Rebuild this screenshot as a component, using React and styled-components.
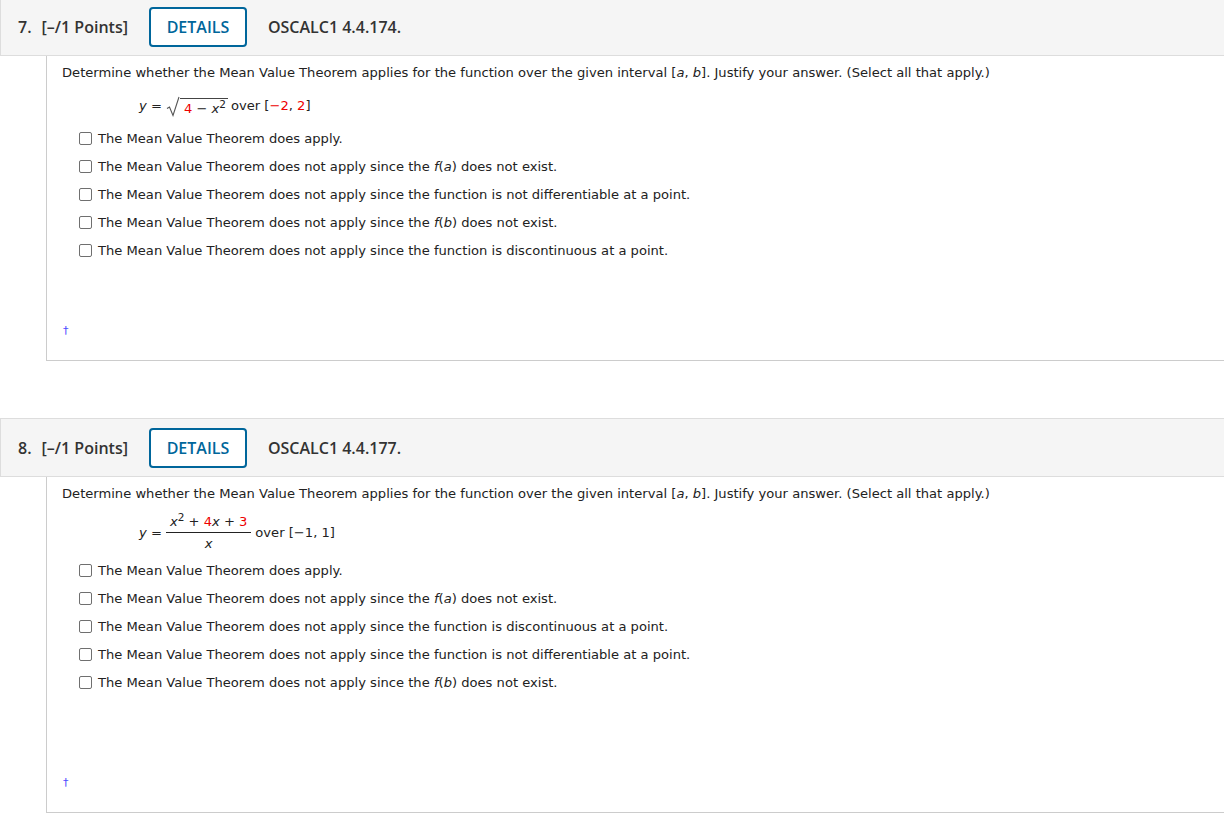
import React from 'react'
import styled, { createGlobalStyle } from 'styled-components'

const GlobalStyle = createGlobalStyle`
  body {
    margin: 0;
    background: #fff;
    font-family: "DejaVu Sans", Verdana, sans-serif;
    color: #222;
  }
`

const Page = styled.div`
  margin-top: -3px;
  display: flex;
  flex-direction: column;
  gap: 57px;
`

const Header = styled.div`
  display: flex;
  align-items: center;
  height: 57px;
  background: #f5f5f5;
  border: 1px solid #ddd;
  border-right: none;
  padding-left: 17px;
  font-family: "Open Sans", "Noto Sans", sans-serif;
  font-size: 16px;
  font-weight: 600;
  color: #333;
`

const Num = styled.span`
  margin-right: 10px;
`

const Points = styled.span`
  margin-right: 21px;
`

const DetailsButton = styled.button`
  width: 98px;
  height: 40px;
  border: 2px solid #00669b;
  border-radius: 4px;
  background: #fff;
  color: #00669b;
  font-family: inherit;
  font-size: 16px;
  font-weight: 600;
  margin-right: 21px;
  padding: 0;
`

const Body = styled.div`
  display: flex;
  flex-direction: column;
  margin-left: 46px;
  min-height: ${p => p.minHeight}px;
  box-sizing: border-box;
  border-left: 1px solid #ccc;
  border-bottom: 1px solid #ccc;
  padding: 8px 0 0 15px;
  font-size: 13.1px;
`

const Prompt = styled.p`
  margin: 0;
  line-height: 18px;
`

const Equation = styled.div`
  display: flex;
  align-items: center;
  height: ${p => p.h}px;
  margin-top: 7px;
  padding-left: 77px;
`

const EqLine = styled.span`
  white-space: nowrap;
`

const I = styled.i`
  font-style: italic;
`

const Red = styled.span`
  color: #e00;
`

const Sup = styled.sup`
  font-size: 10.5px;
  line-height: 0;
  vertical-align: 5px;
`

const Radical = styled.span`
  display: inline-flex;
  align-items: flex-end;
  vertical-align: middle;
  margin: 0 3px 0 4px;
`

const RadicandBox = styled.span`
  border-top: 1px solid #444;
  padding: 2px 2px 0 4px;
  line-height: 16px;
`

const Fraction = styled.span`
  display: inline-flex;
  flex-direction: column;
  align-items: center;
  vertical-align: middle;
  margin: 0 4px;
`

const Numerator = styled.span`
  padding: 0 4px 2px;
  border-bottom: 1px solid #222;
  line-height: 16px;
`

const Denominator = styled.span`
  padding-top: 3px;
  line-height: 16px;
`

const Options = styled.div`
  display: flex;
  flex-direction: column;
`

const Option = styled.label`
  display: flex;
  align-items: center;
  height: 28px;
  padding-left: 17px;
  gap: 6px;
`

const Box = styled.span`
  width: 11px;
  height: 11px;
  border: 1px solid #6f6f6f;
  border-radius: 2px;
  background: #fff;
  flex-shrink: 0;
`

const Dagger = styled.div`
  margin-top: auto;
  margin-bottom: 21px;
  padding-left: 1px;
  color: #4a4aff;
  font-size: 11px;
  line-height: 16px;
`

const F = ({ v }) => (
  <>
    <I>f</I>(<I>{v}</I>)
  </>
)

const RootSign = () => (
  <svg width="14" height="21" viewBox="0 0 14 21">
    <path d="M1 12.5 L3.5 11 L7 19.5 L13 1" fill="none" stroke="#555" strokeWidth="1.1" />
  </svg>
)

const Question = ({ number, code, minHeight, equation, eqHeight, options }) => (
  <div>
    <Header>
      <Num>{number}.</Num>
      <Points>[–/1 Points]</Points>
      <DetailsButton>DETAILS</DetailsButton>
      <span>{code}</span>
    </Header>
    <Body minHeight={minHeight}>
      <Prompt>
        Determine whether the Mean Value Theorem applies for the function over the given interval [<I>a</I>, <I>b</I>]. Justify your answer. (Select all that apply.)
      </Prompt>
      <Equation h={eqHeight}>
        <EqLine>{equation}</EqLine>
      </Equation>
      <Options>
        {options.map((o, i) => (
          <Option key={i}>
            <Box />
            <span>{o}</span>
          </Option>
        ))}
      </Options>
      <Dagger>†</Dagger>
    </Body>
  </div>
)

const eq1 = (
  <>
    <I>y</I> =
    <Radical>
      <RootSign />
      <RadicandBox>
        <Red>4</Red> − <I>x</I>
        <Sup>2</Sup>
      </RadicandBox>
    </Radical>
    over [<Red>−2</Red>, <Red>2</Red>]
  </>
)

const eq2 = (
  <>
    <I>y</I> =
    <Fraction>
      <Numerator>
        <I>x</I>
        <Sup>2</Sup> + <Red>4</Red><I>x</I> + <Red>3</Red>
      </Numerator>
      <Denominator>
        <I>x</I>
      </Denominator>
    </Fraction>
    over [−1, 1]
  </>
)

const base = 'The Mean Value Theorem does not apply since the '

export default function App() {
  return (
    <>
      <GlobalStyle />
      <Page>
        <Question
          number={7}
          code="OSCALC1 4.4.174."
          minHeight={305}
          eqHeight={35}
          equation={eq1}
          options={[
            'The Mean Value Theorem does apply.',
            <>{base}<F v="a" /> does not exist.</>,
            base + 'function is not differentiable at a point.',
            <>{base}<F v="b" /> does not exist.</>,
            base + 'function is discontinuous at a point.',
          ]}
        />
        <Question
          number={8}
          code="OSCALC1 4.4.177."
          minHeight={336}
          eqHeight={46}
          equation={eq2}
          options={[
            'The Mean Value Theorem does apply.',
            <>{base}<F v="a" /> does not exist.</>,
            base + 'function is discontinuous at a point.',
            base + 'function is not differentiable at a point.',
            <>{base}<F v="b" /> does not exist.</>,
          ]}
        />
      </Page>
    </>
  )
}
